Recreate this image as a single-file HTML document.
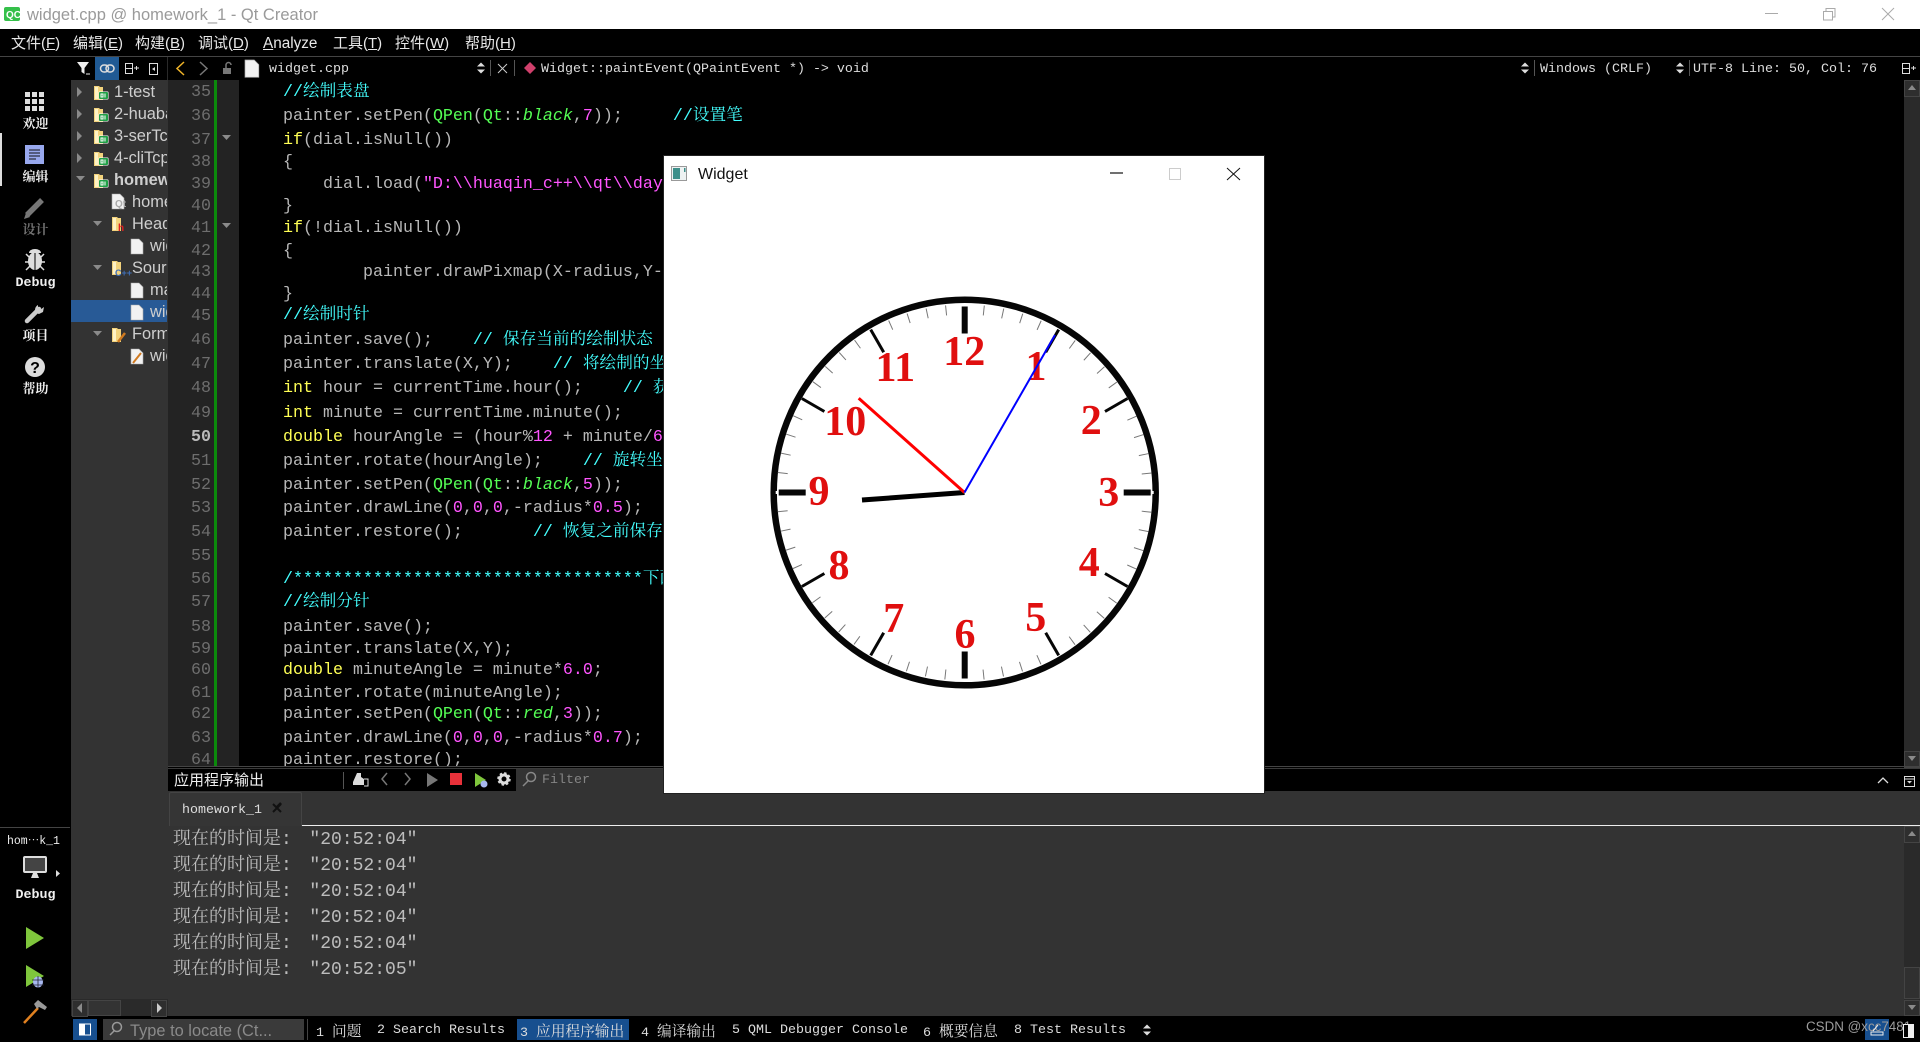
<!DOCTYPE html>
<html lang="zh"><head><meta charset="utf-8"><title>widget.cpp @ homework_1 - Qt Creator</title>
<style>
html,body{margin:0;padding:0;background:#000;width:1920px;height:1042px;overflow:hidden}
#r{position:relative;width:1920px;height:1042px;overflow:hidden;background:#000;font-family:"Liberation Sans","Noto Sans CJK SC",sans-serif}
.b{position:absolute}
.t{position:absolute;white-space:pre;line-height:20px}
.m{font:13.33px/20px "Liberation Mono","Noto Serif CJK SC",monospace;color:#ddd;margin-top:1px}
.m i{font:normal 14.7px/20px "Noto Serif CJK SC",serif}
.mn{font:15px/20px "Liberation Sans","Noto Sans CJK SC",sans-serif;color:#e8e8e8}
.sb{font:bold 13px/20px "Noto Serif CJK SC",serif;color:#f0f0f0;width:71px;left:0;text-align:center}
.sl{font:bold 13.33px/20px "Liberation Mono",monospace;color:#f0f0f0;width:71px;left:0;text-align:center;margin-top:1px}
.tr{font:16.4px/20px "Liberation Sans","Noto Sans CJK SC",sans-serif;color:#cfcfcf}
.ln{position:absolute;left:168px;width:43px;text-align:right;font:16.67px/20px "Liberation Mono",monospace;color:#6e6e6e;margin-top:2px}
.c{position:absolute;left:283px;white-space:pre;font:16.67px/20px "Liberation Mono","Noto Serif CJK SC",monospace;color:#b8b8b8;margin-top:2px}
.c b{font-weight:normal;color:#ffff55}.c u{text-decoration:none;color:#ff55ff}.c s{text-decoration:none;color:#55ff55}.c s i{font-style:italic}.c em{font-style:normal;color:#44ffff}
.o{position:absolute;left:173px;white-space:pre;font:18px/22px "Liberation Mono","Noto Serif CJK SC",monospace;color:#bdbdbd;margin-top:2px}
.o span{margin-left:-4px}
.n{position:absolute;font:bold 42px/42px "Liberation Serif",serif;color:#e00f0f;transform:translate(-50%,-50%);white-space:pre}
</style></head><body><div id="r">

<!-- title bar -->
<div class="b" style="left:0;top:0;width:1920px;height:29px;background:#fff"></div>
<div class="t" style="left:27px;top:5px;font-size:16.5px;color:#9a9a9a">widget.cpp @ homework_1 - Qt Creator</div>

<!-- menu -->
<div class="b" style="left:0;top:56px;width:1920px;height:1px;background:#444"></div>
<div class="t mn" style="left:11px;top:34px">文件(<u>F</u>)</div>
<div class="t mn" style="left:73px;top:34px">编辑(<u>E</u>)</div>
<div class="t mn" style="left:135px;top:34px">构建(<u>B</u>)</div>
<div class="t mn" style="left:198px;top:34px">调试(<u>D</u>)</div>
<div class="t mn" style="left:263px;top:34px;font-size:15.3px"><u>A</u>nalyze</div>
<div class="t mn" style="left:333px;top:34px">工具(<u>T</u>)</div>
<div class="t mn" style="left:395px;top:34px">控件(<u>W</u>)</div>
<div class="t mn" style="left:465px;top:34px">帮助(<u>H</u>)</div>

<!-- tree panel -->
<div class="b" style="left:71px;top:80px;width:97px;height:936px;background:#333"></div>
<div class="b" style="left:71px;top:300px;width:96px;height:22px;background:#285a96"></div>
<div class="b" style="left:95px;top:57px;width:24px;height:23px;background:#205a94"></div>
<div class="b" style="left:167px;top:57px;width:1px;height:23px;background:#2a2a2a"></div>
<div class="b" style="left:71px;top:999px;width:97px;height:17px;background:#2a2a2a"></div>
<div class="b" style="left:72px;top:1000px;width:14px;height:15px;border:1px solid #444;background:#2e2e2e"></div>
<div class="b" style="left:88px;top:1000px;width:31px;height:14px;border:1px solid #444;background:#333"></div>
<div class="b" style="left:151px;top:1000px;width:14px;height:15px;border:1px solid #444;background:#2e2e2e"></div>
<div class="b" style="left:71px;top:80px;width:96px;height:300px;overflow:hidden">
<div class="t tr" style="left:43px;top:2px">1-test</div>
<div class="t tr" style="left:43px;top:24px">2-huabanlll</div>
<div class="t tr" style="left:43px;top:46px">3-serTcpxxx</div>
<div class="t tr" style="left:43px;top:68px">4-cliTcpxxx</div>
<div class="t tr" style="left:43px;top:90px;font-weight:bold">homework_1</div>
<div class="t tr" style="left:61px;top:112px">homework_1.pro</div>
<div class="t tr" style="left:61px;top:134px">Headers</div>
<div class="t tr" style="left:79px;top:156px">widget.h</div>
<div class="t tr" style="left:61px;top:178px">Sources</div>
<div class="t tr" style="left:79px;top:200px">main.cpp</div>
<div class="t tr" style="left:79px;top:222px">widget.cpp</div>
<div class="t tr" style="left:61px;top:244px">Forms</div>
<div class="t tr" style="left:79px;top:266px">widget.ui</div>
</div>

<!-- gutter -->
<div class="b" style="left:168px;top:80px;width:71px;height:687px;background:#232323"></div>
<div class="b" style="left:214px;top:80px;width:3px;height:687px;background:#0b8a0b"></div>

<div class="ln" style="top:81px">35</div><div class="ln" style="top:105px">36</div><div class="ln" style="top:129px">37</div><div class="ln" style="top:151px">38</div><div class="ln" style="top:173px">39</div><div class="ln" style="top:195px">40</div><div class="ln" style="top:217px">41</div><div class="ln" style="top:240px">42</div><div class="ln" style="top:261px">43</div><div class="ln" style="top:283px">44</div><div class="ln" style="top:305px">45</div><div class="ln" style="top:329px">46</div><div class="ln" style="top:353px">47</div><div class="ln" style="top:377px">48</div><div class="ln" style="top:402px">49</div><div class="ln" style="top:426px;font-weight:bold;color:#bbb">50</div><div class="ln" style="top:450px">51</div><div class="ln" style="top:474px">52</div><div class="ln" style="top:497px">53</div><div class="ln" style="top:521px">54</div><div class="ln" style="top:545px">55</div><div class="ln" style="top:568px">56</div><div class="ln" style="top:591px">57</div><div class="ln" style="top:616px">58</div><div class="ln" style="top:638px">59</div><div class="ln" style="top:659px">60</div><div class="ln" style="top:682px">61</div><div class="ln" style="top:703px">62</div><div class="ln" style="top:727px">63</div><div class="ln" style="top:749px;height:15px;overflow:hidden">64</div>

<!-- code -->
<div class="c" style="top:81px"><em>//绘制表盘</em></div>
<div class="c" style="top:105px">painter.setPen(<s>QPen</s>(<s>Qt</s>::<s><i>black</i></s>,<u>7</u>));     <em>//设置笔</em></div>
<div class="c" style="top:129px"><b>if</b>(dial.isNull())</div>
<div class="c" style="top:151px">{</div>
<div class="c" style="top:173px">    dial.load(<u>"D:\\huaqin_c++\\qt\\day</u></div>
<div class="c" style="top:195px">}</div>
<div class="c" style="top:217px"><b>if</b>(!dial.isNull())</div>
<div class="c" style="top:240px">{</div>
<div class="c" style="top:261px">        painter.drawPixmap(X-radius,Y-radius</div>
<div class="c" style="top:283px">}</div>
<div class="c" style="top:304px"><em>//绘制时针</em></div>
<div class="c" style="top:329px">painter.save();    <em>// 保存当前的绘制状态</em></div>
<div class="c" style="top:353px">painter.translate(X,Y);    <em>// 将绘制的坐标</em></div>
<div class="c" style="top:377px"><b>int</b> hour = currentTime.hour();    <em>// 获取</em></div>
<div class="c" style="top:402px"><b>int</b> minute = currentTime.minute();</div>
<div class="c" style="top:426px"><b>double</b> hourAngle = (hour%<u>12</u> + minute/<u>6</u></div>
<div class="c" style="top:450px">painter.rotate(hourAngle);    <em>// 旋转坐标</em></div>
<div class="c" style="top:474px">painter.setPen(<s>QPen</s>(<s>Qt</s>::<s><i>black</i></s>,<u>5</u>));</div>
<div class="c" style="top:497px">painter.drawLine(<u>0</u>,<u>0</u>,<u>0</u>,-radius*<u>0.5</u>);</div>
<div class="c" style="top:521px">painter.restore();       <em>// 恢复之前保存的</em></div>
<div class="c" style="top:568px"><em>/***********************************下面</em></div>
<div class="c" style="top:591px"><em>//绘制分针</em></div>
<div class="c" style="top:616px">painter.save();</div>
<div class="c" style="top:638px">painter.translate(X,Y);</div>
<div class="c" style="top:659px"><b>double</b> minuteAngle = minute*<u>6.0</u>;</div>
<div class="c" style="top:682px">painter.rotate(minuteAngle);</div>
<div class="c" style="top:703px">painter.setPen(<s>QPen</s>(<s>Qt</s>::<s><i>red</i></s>,<u>3</u>));</div>
<div class="c" style="top:727px">painter.drawLine(<u>0</u>,<u>0</u>,<u>0</u>,-radius*<u>0.7</u>);</div>
<div class="b" style="left:283px;top:749px;width:300px;height:17px;overflow:hidden"><div class="c" style="left:0;top:0">painter.restore();</div></div>

<!-- editor toolbar text -->
<div class="t m" style="left:269px;top:59px">widget.cpp</div>
<div class="t m" style="left:541px;top:59px">Widget::paintEvent(QPaintEvent *) -&gt; void</div>
<div class="t m" style="left:1540px;top:59px">Windows (CRLF)</div>
<div class="t m" style="left:1693px;top:59px">UTF-8 Line: 50, Col: 76</div>

<!-- scrollbars & bottom panes -->
<div class="b" style="left:1904px;top:80px;width:16px;height:687px;background:#2a2a2a"></div>
<div class="b" style="left:1904px;top:80px;width:14px;height:15px;border:1px solid #444;background:#2e2e2e"></div>
<div class="b" style="left:1904px;top:751px;width:14px;height:15px;border:1px solid #444;background:#2e2e2e"></div>
<div class="b" style="left:168px;top:766px;width:1752px;height:1px;background:#444"></div>
<div class="b" style="left:168px;top:768px;width:1752px;height:1px;background:#3a3a3a"></div>
<div class="b" style="left:516px;top:769px;width:148px;height:22px;background:#333"></div>
<div class="t" style="left:174px;top:770px;font:15px/20px 'Noto Sans CJK SC',sans-serif;color:#eee">应用程序输出</div>
<div class="b" style="left:343px;top:772px;width:1px;height:17px;background:#555"></div>
<div class="t m" style="left:542px;top:770px;color:#858585">Filter</div>

<div class="b" style="left:168px;top:791px;width:1752px;height:225px;background:#333"></div>
<div class="b" style="left:301px;top:825px;width:1619px;height:1px;background:#eee"></div>
<div class="b" style="left:169px;top:792px;width:131px;height:33px;background:#353535;border:1px solid #444;border-bottom:0;border-radius:2px 2px 0 0"></div>
<div class="t m" style="left:182px;top:800px">homework_1</div>
<div class="b" style="left:1904px;top:826px;width:16px;height:190px;background:#2a2a2a"></div>
<div class="b" style="left:1904px;top:826px;width:14px;height:15px;border:1px solid #444;background:#2e2e2e"></div>
<div class="b" style="left:1904px;top:967px;width:14px;height:30px;border:1px solid #444;background:#303030"></div>
<div class="b" style="left:1904px;top:1000px;width:14px;height:14px;border:1px solid #444;background:#2e2e2e"></div>

<div class="o" style="top:827px">现在的时间是:  <span>"20:52:04"</span></div>
<div class="o" style="top:853px">现在的时间是:  <span>"20:52:04"</span></div>
<div class="o" style="top:879px">现在的时间是:  <span>"20:52:04"</span></div>
<div class="o" style="top:905px">现在的时间是:  <span>"20:52:04"</span></div>
<div class="o" style="top:931px">现在的时间是:  <span>"20:52:04"</span></div>
<div class="o" style="top:957px">现在的时间是:  <span>"20:52:05"</span></div>

<!-- status bar -->
<div class="b" style="left:73px;top:1019px;width:24px;height:21px;background:#174f8f"></div>
<div class="b" style="left:103px;top:1019px;width:201px;height:21px;background:#3a3a3a"></div>
<div class="t" style="left:130px;top:1021px;font-size:16.4px;color:#8a8a8a">Type to locate (Ct...</div>
<div class="b" style="left:307px;top:1019px;width:1px;height:21px;background:#444"></div>
<div class="b" style="left:517px;top:1019px;width:112px;height:21px;background:#174f8f"></div>
<div class="t m" style="left:316px;top:1020px">1 <i>问题</i></div>
<div class="t m" style="left:377px;top:1020px">2 Search Results</div>
<div class="t m" style="left:520px;top:1020px">3 <i>应用程序输出</i></div>
<div class="t m" style="left:641px;top:1020px">4 <i>编译输出</i></div>
<div class="t m" style="left:732px;top:1020px">5 QML Debugger Console</div>
<div class="t m" style="left:923px;top:1020px">6 <i>概要信息</i></div>
<div class="t m" style="left:1014px;top:1020px">8 Test Results</div>
<div class="b" style="left:1865px;top:1019px;width:24px;height:21px;background:#174f8f"></div>
<div class="t" style="left:1806px;top:1017px;font-size:13.4px;color:#9c9c9c">CSDN @xcc7481</div>

<!-- sidebar labels -->
<div class="b" style="left:0;top:133px;width:2px;height:53px;background:#ddd"></div>
<div class="t sb" style="top:113px">欢迎</div>
<div class="t sb" style="top:166px">编辑</div>
<div class="t sb" style="top:219px;color:#707070">设计</div>
<div class="t sl" style="top:273px">Debug</div>
<div class="t sb" style="top:325px">项目</div>
<div class="t sb" style="top:378px">帮助</div>
<div class="b" style="left:0;top:827px;width:70px;height:1px;background:#444"></div>
<div class="t m" style="left:7px;top:831px;color:#eee;font-size:11.5px">hom⋯k_1</div>
<div class="t sl" style="top:885px">Debug</div>

<!-- icons -->
<svg class="b" style="left:0;top:0" width="1920" height="1042" viewBox="0 0 1920 1042">
<defs>
<g id="fo"><path d="M0 1h5l1 1h3v13H0z" fill="#f3d37c"/><path d="M1 2h3v12H1z" fill="#fff2c4"/></g>
<g id="qb"><rect x="-.5" y="-.5" width="10" height="8" rx="1" fill="#fff"/><rect x="0" y="0" width="9" height="7" rx="1" fill="#21a047"/><path d="M2 2h2v3H2zM6 1.500v4" stroke="#fff" fill="none"/></g>
<path id="fi" d="M0 0h8l4 4v11H0z" fill="#f2f2f2" stroke="#aaa" stroke-width=".6"/>
<path id="ud" d="M0 -1.500l4 -4 4 4zM0 1.500l4 4 4 -4z" fill="#ddd"/>
<path id="up" d="M-4 2L0 -3L4 2z" fill="#8a8a8a"/>
<path id="dn" d="M-4 -2L0 3L4 -2z" fill="#8a8a8a"/>
<path id="ar" d="M0 0L5 5L0 10z" fill="#8a8a8a"/>
<path id="ad" d="M0 0L9 0L4.500 5z" fill="#8a8a8a"/>
</defs>

<!-- app icon + win controls -->
<rect x="4" y="7" width="16" height="14" rx="2" fill="#35c04a"/>
<text x="6" y="18" font-family="Liberation Sans" font-size="10" font-weight="bold" fill="#fff">QC</text>
<path d="M1765 13.500h13" stroke="#aaa"/>
<path d="M1823.500 11.500h9v8.500h-9zM1826 11v-2.500h9v8.500h-2" fill="none" stroke="#aaa"/>
<path d="M1882 8l12 12M1894 8l-12 12" stroke="#aaa"/>

<!-- tree toolbar -->
<path d="M77 62h12l-4.500 6v6l-3 -2v-4z" fill="#eee"/><path d="M86 74h4" stroke="#eee"/>
<g fill="none" stroke="#ddd" stroke-width="1.500"><rect x="100.500" y="65" width="8" height="7" rx="3.500"/><rect x="106" y="65" width="8" height="7" rx="3.500"/></g>
<path d="M125.500 63.500h7v5h-7zM125.500 68.500h7v5h-7zM134 68h5M136.500 66v4" fill="none" stroke="#ddd"/>
<rect x="149.500" y="63.500" width="8" height="11" fill="none" stroke="#ddd"/><path d="M155 67l-3 2 3 2z" fill="#ddd"/>
<path d="M184 62l-7 6.500 7 6.500" fill="none" stroke="#f0b429" stroke-width="1.500"/>
<path d="M200 62l7 6.500-7 6.500" fill="none" stroke="#777" stroke-width="1.500"/>
<rect x="223" y="68" width="8" height="6" fill="#777"/><path d="M226 68v-3a2.500 2.500 0 0 1 5 0" fill="none" stroke="#777" stroke-width="1.500"/>
<use href="#fi" transform="translate(245,60) scale(1.150)"/>
<use href="#ud" transform="translate(477,68)"/>
<path d="M490.500 60v16M514.500 60v16" stroke="#555"/>
<path d="M498 64l9 9M507 64l-9 9" stroke="#ccc"/>
<path d="M524 68l6-6 6 6-6 6z" fill="#d0406c"/>
<use href="#ud" transform="translate(1521,68)"/><path d="M1534.500 60v16M1689.500 60v16" stroke="#555"/>
<use href="#ud" transform="translate(1676,68)"/>
<path d="M1902.500 63.500h7v5h-7zM1902.500 68.500h7v5h-7zM1911 68h5M1913.500 66v4" fill="none" stroke="#ddd"/>
<use href="#up" transform="translate(1912,88)"/><use href="#dn" transform="translate(1912,758)"/>
<use href="#up" transform="translate(1912,834)"/><use href="#dn" transform="translate(1912,1007)"/>

<!-- gutter fold -->
<use href="#ad" transform="translate(222,135)"/><use href="#ad" transform="translate(222,223)"/>

<!-- tree icons -->
<use href="#ar" transform="translate(77,87)"/><use href="#ar" transform="translate(77,109)"/><use href="#ar" transform="translate(77,131)"/><use href="#ar" transform="translate(77,153)"/>
<use href="#ad" transform="translate(76,176)"/><use href="#ad" transform="translate(93,221)"/><use href="#ad" transform="translate(93,265)"/><use href="#ad" transform="translate(93,331)"/>
<use href="#fo" transform="translate(94,85)"/><use href="#qb" transform="translate(99,92)"/>
<use href="#fo" transform="translate(94,107)"/><use href="#qb" transform="translate(99,114)"/>
<use href="#fo" transform="translate(94,129)"/><use href="#qb" transform="translate(99,136)"/>
<use href="#fo" transform="translate(94,151)"/><use href="#qb" transform="translate(99,158)"/>
<use href="#fo" transform="translate(94,173)"/><use href="#qb" transform="translate(99,180)"/>
<use href="#fi" transform="translate(112,194)"/>
<text x="115" y="207" font-family="Liberation Sans" font-size="10" fill="#aaa" font-weight="bold">Qt</text>
<use href="#fo" transform="translate(112,216)"/><text x="118" y="231" font-family="Liberation Sans" font-size="10" font-weight="bold" fill="#e02020">h</text>
<use href="#fi" transform="translate(131,239)"/>
<use href="#fo" transform="translate(112,260)"/><text x="115" y="276" font-family="Liberation Sans" font-size="9" font-weight="bold" fill="#3f6fb8">C++</text>
<use href="#fi" transform="translate(131,283)"/>
<use href="#fi" transform="translate(131,305)"/>
<use href="#fo" transform="translate(112,327)"/><path d="M118 342l7-9" stroke="#d07a20" stroke-width="2.500"/>
<use href="#fi" transform="translate(131,349)"/><path d="M133 363l8-10" stroke="#d07a20" stroke-width="2"/>

<!-- sidebar icons -->
<g fill="#ddd"><rect x="25" y="92" width="5" height="5"/><rect x="32" y="92" width="5" height="5"/><rect x="39" y="92" width="5" height="5"/><rect x="25" y="99" width="5" height="5"/><rect x="32" y="99" width="5" height="5"/><rect x="39" y="99" width="5" height="5"/><rect x="25" y="106" width="5" height="5"/><rect x="32" y="106" width="5" height="5"/><rect x="39" y="106" width="5" height="5"/></g>
<rect x="25" y="145" width="19" height="19" fill="#98a8ee"/><path d="M29 150h11M29 153h11M29 156h11M29 159h7" stroke="#111"/>
<path d="M27 215l15-15" stroke="#777" stroke-width="5.500"/><path d="M24 219l2-6 4 4z" fill="#777"/>
<ellipse cx="35" cy="261" rx="7" ry="9" fill="#ddd"/><path d="M35 252v18" stroke="#000"/><path d="M29 253a6 4 0 0 1 12 0z" fill="#ddd"/>
<path d="M26 254l4 4M44 254l-4 4M25 262h5M45 262h-5M26 270l4-4M44 270l-4-4" stroke="#ddd" stroke-width="1.500"/>
<path d="M27 321l12-12" stroke="#ccc" stroke-width="4.500" stroke-linecap="round"/><path d="M38 305a5.500 5.500 0 0 0-2 8l3 1 4-2 1-5-4 3-2-1z" fill="#ccc"/>
<circle cx="35" cy="367" r="10" fill="#ddd"/><text x="35" y="373" text-anchor="middle" font-family="Liberation Sans" font-size="16" font-weight="bold" fill="#000">?</text>

<rect x="24" y="857" width="22" height="15" rx="1" fill="#444" stroke="#ddd" stroke-width="2"/><path d="M33 873h4l2 5h-8z" fill="#ddd"/>
<path d="M56 870l4 3.500-4 3.500z" fill="#ddd"/>
<path d="M26 927l18 11-18 11z" fill="#7fc63c"/>
<path d="M26 965l18 11-18 11z" fill="#7fc63c"/><ellipse cx="38" cy="982" rx="5" ry="5.500" fill="#a8b8f0"/><path d="M38 976v12M32 980h12M32 985h12" stroke="#223" stroke-width=".8"/>
<path d="M24 1023l14-15" stroke="#e08020" stroke-width="2.500"/><path d="M34 1004l4-4 9 7-2 3-6-3-2 2z" fill="#999"/>

<!-- tree scroll arrows -->
<path d="M82 1003v10l-5-5z" fill="#8a8a8a"/><path d="M157 1003v10l5-5z" fill="#ccc"/>

<!-- output toolbar -->
<path d="M357 773h4v4l3 2v6h-11v-3z" fill="#ddd"/><path d="M364 779h4v7h-4" fill="none" stroke="#ddd"/>
<path d="M387 773l-5 6 5 6" fill="none" stroke="#777" stroke-width="1.500"/>
<path d="M405 773l5 6-5 6" fill="none" stroke="#777" stroke-width="1.500"/>
<path d="M427 773l11 7-11 7z" fill="#777"/>
<rect x="450" y="773" width="12" height="12" fill="#e8313a"/>
<path d="M475 773l11 7-11 7z" fill="#7fc63c"/><ellipse cx="484" cy="784" rx="3.500" ry="3.500" fill="#a8b8f0"/>
<circle cx="504" cy="779" r="4" fill="none" stroke="#ddd" stroke-width="3"/><circle cx="504" cy="779" r="6" fill="none" stroke="#ddd" stroke-width="1.500" stroke-dasharray="2.500 2.200"/>
<circle cx="531" cy="777" r="4.500" fill="none" stroke="#888" stroke-width="1.500"/><path d="M528 781l-5 5" stroke="#888" stroke-width="1.500"/>
<path d="M1878 783l5-5 5 5" fill="none" stroke="#ddd" stroke-width="1.300"/>
<rect x="1904.500" y="776.500" width="10" height="10" fill="none" stroke="#ddd"/><path d="M1904 779h11" stroke="#ddd"/><path d="M1907 781h5l-2.500 2.500z" fill="#ddd"/>
<path d="M273 804l8 8M281 804l-8 8" stroke="#111" stroke-width="2"/><path d="M277 807l4-4" stroke="#111" stroke-width="2.500"/>

<!-- status icons -->
<rect x="79.500" y="1024" width="11" height="11" fill="none" stroke="#fff"/><rect x="80" y="1024" width="5" height="11" fill="#fff"/>
<circle cx="117" cy="1027" r="4.500" fill="none" stroke="#999" stroke-width="1.500"/><path d="M114 1031l-4 4" stroke="#999" stroke-width="1.500"/>
<use href="#ud" transform="translate(1143,1030)"/>
<path d="M1871 1032h12v3h-12zM1873 1031l5-6" fill="none" stroke="#eee"/>
<rect x="1903.500" y="1024.500" width="10" height="13" fill="#000" stroke="#eee"/><rect x="1908" y="1024" width="6" height="14" fill="#eee"/>
</svg>

<!-- widget window -->
<div class="b" style="left:664px;top:156px;width:600px;height:637px;background:#fff;box-shadow:0 0 0 1px #222">
<div class="t" style="left:34px;top:9px;font-size:16px;color:#111">Widget</div>
<svg class="b" style="left:0;top:0" width="600" height="637" viewBox="664 156 600 637">
<rect x="671.500" y="166.500" width="15" height="14" fill="#eef2f2" stroke="#999"/><rect x="673" y="168" width="7" height="11" fill="#3d8f8a"/><rect x="684" y="168" width="1.500" height="4" fill="#3d8f8a"/>
<path d="M1110 173h13" stroke="#111" stroke-width="1.200"/>
<rect x="1169.500" y="168.500" width="11" height="11" fill="none" stroke="#ccc"/>
<path d="M1227 168l13 12M1240 168l-13 12" stroke="#111" stroke-width="1"/>

<ellipse cx="964.700" cy="492.500" rx="191" ry="192.800" fill="#fff" stroke="#060606" stroke-width="6.500"/>
<circle cx="964.700" cy="492.500" r="183" fill="none" stroke="#777" stroke-width="10" stroke-dasharray="1 18.164" stroke-dashoffset=".5" transform="rotate(-90 964.700 492.500)"/>
<g stroke="#fff" stroke-width="3" transform="translate(964.700,492.500)">
<path d="M0-189v13M0 189v-13M-189 0h13M189 0h-13"/>
</g>
<g stroke="#060606" transform="translate(964.700,492.500)">
<path d="M0-186V-159M0 186V159M-186 0H-159M186 0H159" stroke-width="6"/>
<g stroke-width="3">
<path d="M0-188V-162" transform="rotate(30)"/><path d="M0-188V-162" transform="rotate(60)"/>
<path d="M0-188V-162" transform="rotate(120)"/><path d="M0-188V-162" transform="rotate(150)"/>
<path d="M0-188V-162" transform="rotate(210)"/><path d="M0-188V-162" transform="rotate(240)"/>
<path d="M0-188V-162" transform="rotate(300)"/><path d="M0-188V-162" transform="rotate(330)"/>
</g></g>
</svg>
<div class="n" style="left:300.300px;top:195.700px">12</div>
<div class="n" style="left:231.300px;top:211.700px">11</div>
<div class="n" style="left:181.300px;top:265.700px">10</div>
<div class="n" style="left:155px;top:336.300px">9</div>
<div class="n" style="left:175px;top:409.700px">8</div>
<div class="n" style="left:229.700px;top:463px">7</div>
<div class="n" style="left:301px;top:479px">6</div>
<div class="n" style="left:371.700px;top:462.300px">5</div>
<div class="n" style="left:425.300px;top:407.300px">4</div>
<div class="n" style="left:444.700px;top:337.300px">3</div>
<div class="n" style="left:427.300px;top:264.700px">2</div>
<div class="n" style="left:372px;top:211.300px">1</div>
<svg class="b" style="left:0;top:0" width="600" height="637" viewBox="664 156 600 637">
<path d="M964.500 492.500L862 500" stroke="#000" stroke-width="5"/>
<path d="M964.500 492.500L858.700 398.300" stroke="#f00" stroke-width="3"/>
<path d="M964.500 492.500L1055 335" stroke="#00f" stroke-width="2"/>
</svg>
</div>
</div></body></html>
